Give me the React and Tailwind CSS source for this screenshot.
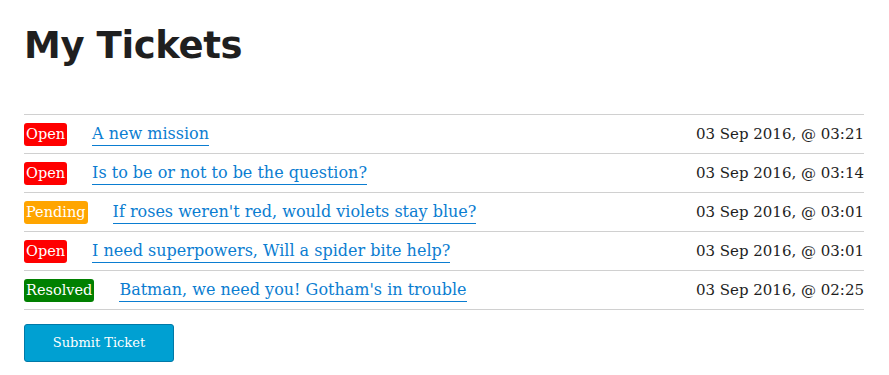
const tickets = [
  { status: 'Open', title: 'A new mission', date: '03 Sep 2016, @ 03:21' },
  { status: 'Open', title: 'Is to be or not to be the question?', date: '03 Sep 2016, @ 03:14' },
  { status: 'Pending', title: "If roses weren't red, would violets stay blue?", date: '03 Sep 2016, @ 03:01' },
  { status: 'Open', title: 'I need superpowers, Will a spider bite help?', date: '03 Sep 2016, @ 03:01' },
  { status: 'Resolved', title: "Batman, we need you! Gotham's in trouble", date: '03 Sep 2016, @ 02:25' },
];

const badgeColors = {
  Open: 'bg-[#ff0000]',
  Pending: 'bg-[#ffa500]',
  Resolved: 'bg-[#008000]',
};

export default function App() {
  return (
    <div className="bg-white min-h-[375px] px-6 pt-[22px] font-['DejaVu_Serif',serif]">
      <h1 className="font-['DejaVu_Sans',sans-serif] font-bold text-[37px] leading-[48px] text-[#1f1f1f] tracking-[-0.4px]">
        My Tickets
      </h1>

      <div className="mt-11 w-[840px] border-t border-[#d0d0d0]">
        {tickets.map((t, i) => (
          <div key={i} className="h-[39px] flex items-center justify-between border-b border-[#d0d0d0]">
            <div className="flex items-center">
              <span
                className={`${badgeColors[t.status]} text-white text-[14.5px] leading-[23px] px-[2px] rounded-[3px] mr-[25px]`}
              >
                {t.status}
              </span>
              <a href="#" className="text-[#0b7dd1] text-[16px] leading-[22px] border-b-[1.5px] border-[#0b7dd1]">
                {t.title}
              </a>
            </div>
            <span className="text-[15px] text-[#1e1e1e]">{t.date}</span>
          </div>
        ))}
      </div>

      <button className="mt-[14px] w-[150px] h-[38px] bg-[#00a0d2] border border-[#0079a8] rounded-[3px] text-white text-[13px]">
        Submit Ticket
      </button>
    </div>
  );
}
